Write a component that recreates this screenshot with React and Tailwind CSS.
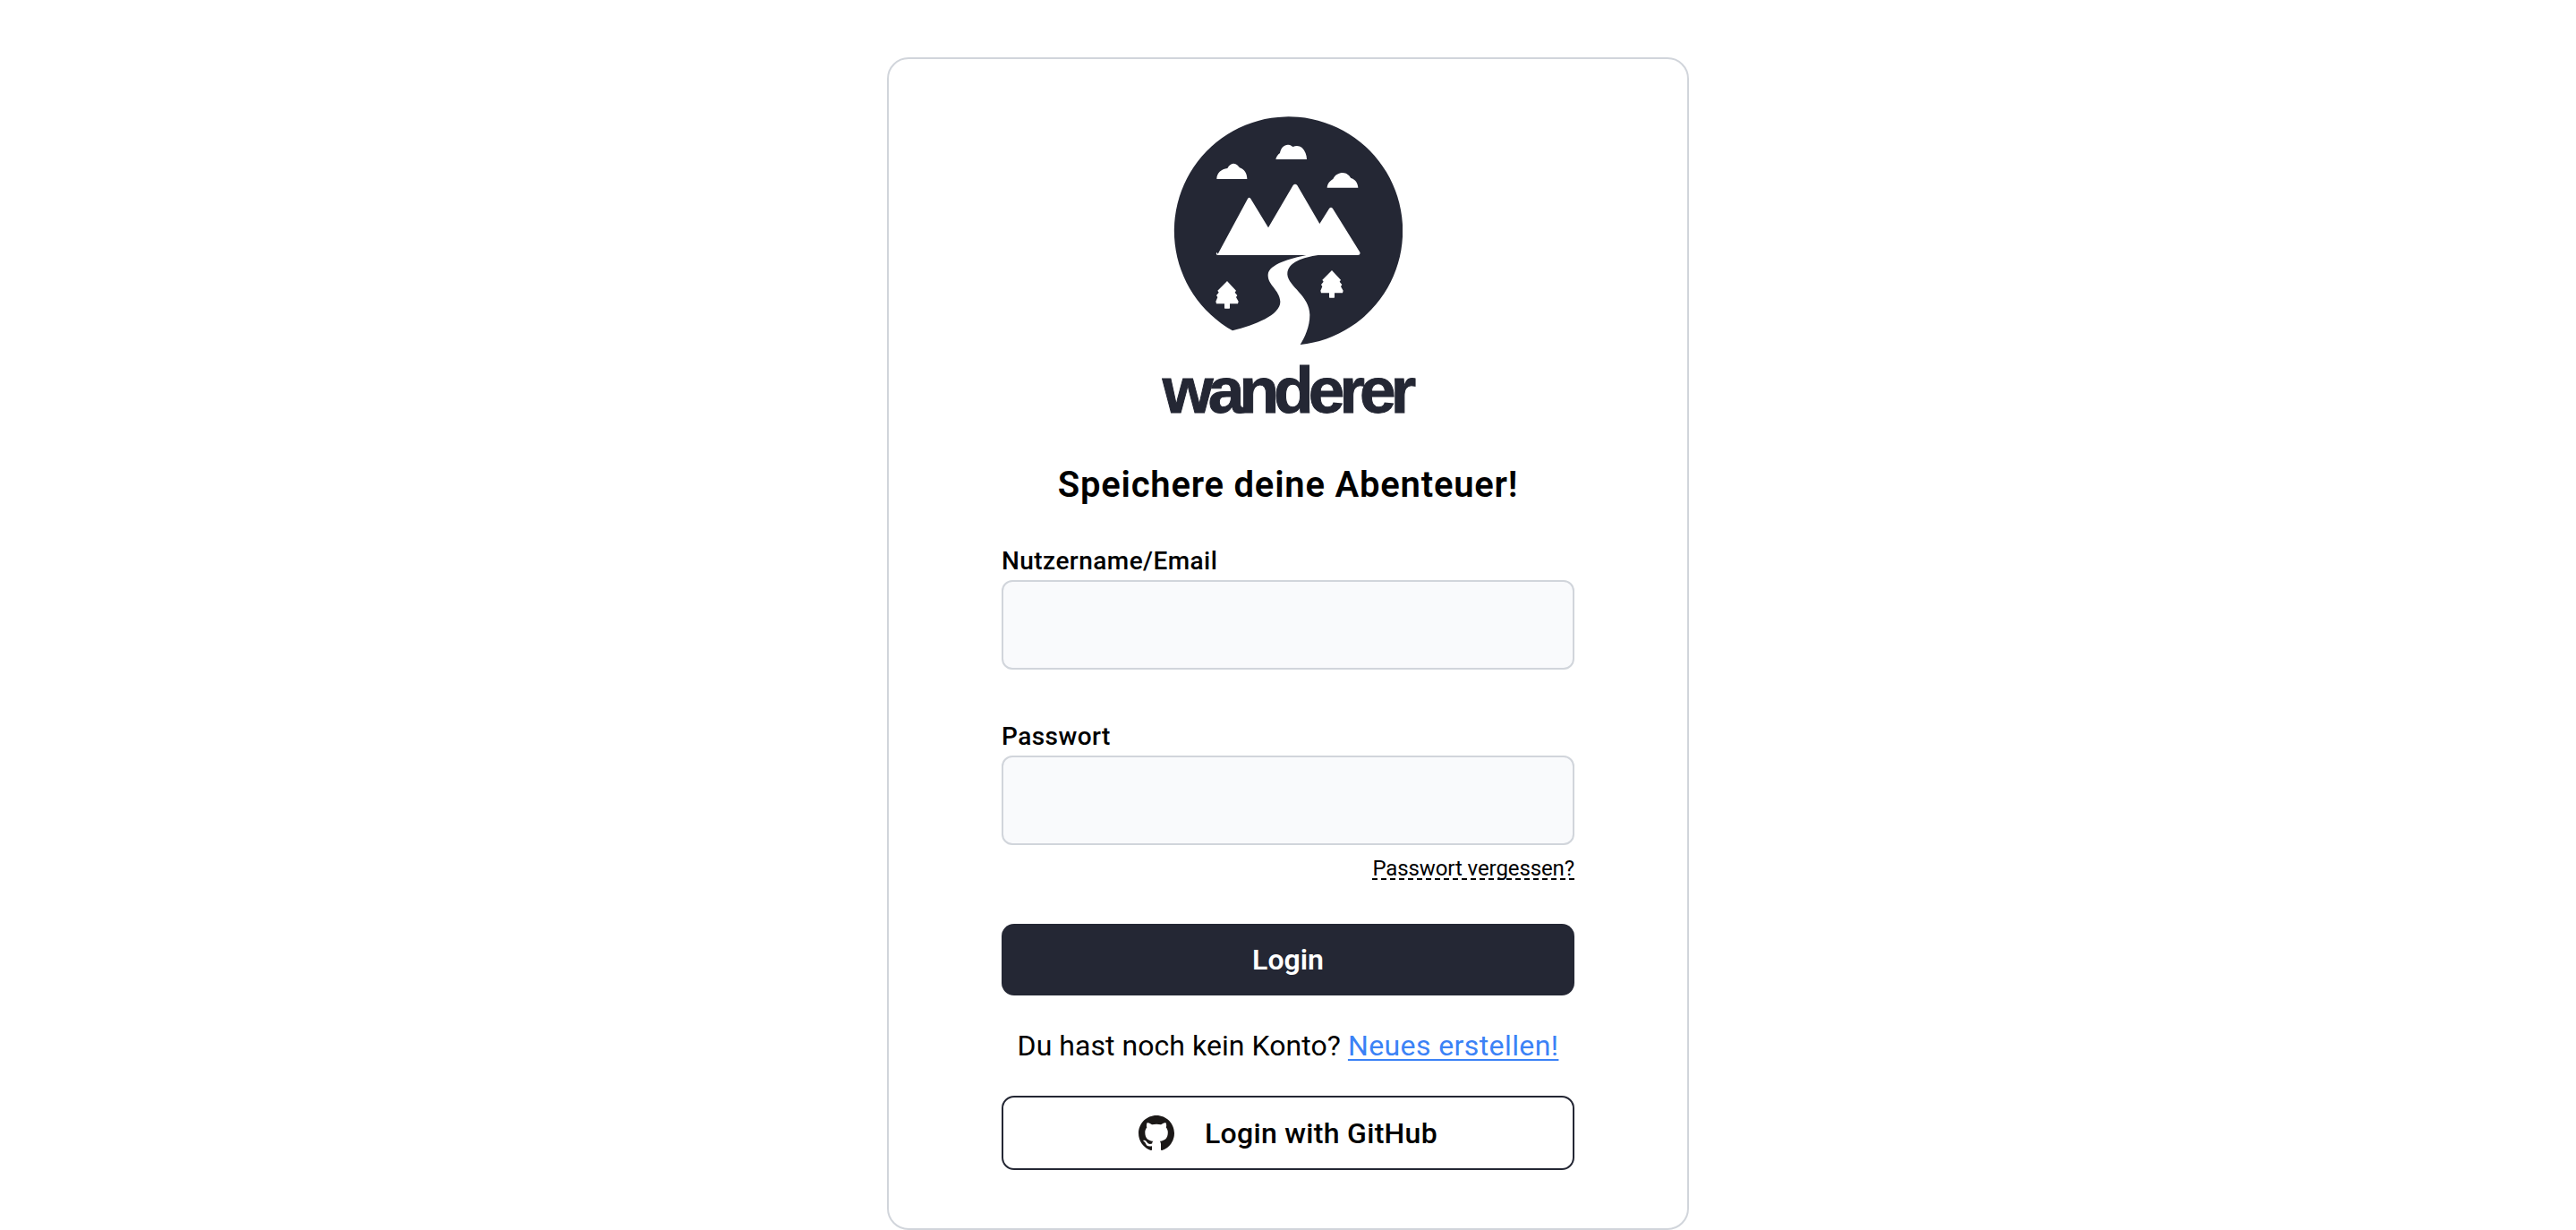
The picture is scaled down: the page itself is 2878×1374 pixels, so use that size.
import React from 'react';
import { BsGithub } from 'react-icons/bs';

const FONT = "font-['Roboto','Liberation_Sans',sans-serif]";

// Montagne, rivière, nuages et sapins du logo
function LogoMark() {
  const tree = 'M0 0 L30 32 L26 38 L34 48 L30 54 L38 68 L36 76 L9 76 L9 90 Q9 92 7 92 L-7 92 Q-9 92 -9 90 L-9 76 L-36 76 L-38 68 L-32 54 L-36 48 L-28 38 L-32 32 Z';
  return (
    <svg viewBox="155 60 768 768" className="w-[256px] h-[256px]">
      <path
        fill="#242734"
        d="M580 825 A383 383 0 1 0 353 778 C430 758 515 725 513 680 C510 640 470 625 472 590 C475 555 550 535 600 525 L640 525 C590 532 535 550 537 590 C540 630 612 660 612 725 C612 765 595 800 580 825 Z"
      />
      <g fill="#ffffff">
        <path d="M304 521 L404 336 Q409 328 414 336 L473 433 L556 291 Q563 284 570 291 L645 420 L677 369 Q683 362 689 369 L780 515 Q783 525 773 525 L306 525 Q295 525 300 515 Z" />
        <path d="M300 270 C300 250 315 237 336 234 C342 222 350 218 357 218 C366 218 372 226 377 232 C392 236 402 252 402 270 Z" />
        <path d="M498 204 C500 195 505 188 512 183 C515 165 527 154 540 155 C548 155 552 160 556 162 C565 157 578 158 586 165 C596 175 602 190 602 204 Z" />
        <path d="M670 299 C671 285 680 276 690 270 C697 255 710 249 722 249 C735 249 745 258 750 267 C764 271 773 283 774 299 Z" />
        <path d={tree} transform="translate(335 612)" />
        <path d={tree} transform="translate(686 576)" />
      </g>
    </svg>
  );
}

function Field({ label, className }) {
  return (
    <div className={className}>
      <label className="block text-[28px] leading-[42px] font-medium tracking-[0.45px] text-black">{label}</label>
      <input className="block w-full h-[100px] bg-[#f9fafc] border-2 border-[#d1d5db] rounded-[12px]" />
    </div>
  );
}

export default function App() {
  return (
    <div className={`${FONT} bg-white min-h-screen flex justify-center pt-[64px]`}>
      <div className="w-[896px] h-[1310px] border-2 border-[#d1d5db] rounded-[24px] flex flex-col items-center px-[126px] pt-[64px]">
        <LogoMark />
        <div className="font-['Liberation_Sans',sans-serif] font-bold text-[73px] leading-[84px] tracking-[-5.9px] [-webkit-text-stroke:1px_#242734] text-[#242734] mt-[8px] -ml-[3px]">
          wanderer
        </div>

        <h1 className="text-[40px] leading-[56px] font-semibold tracking-[0.78px] text-black mt-[36px] text-center">
          Speichere deine Abenteuer!
        </h1>

        <form className="w-full flex flex-col mt-[36px]">
          <Field label="Nutzername/Email" />
          <Field label="Passwort" className="mt-[54px]" />
          <div className="flex justify-end mt-[10px]">
            <a className="text-[24px] leading-[32px] tracking-[-0.1px] text-black underline decoration-dashed decoration-[1.5px] underline-offset-[3px] [text-decoration-skip-ink:none]">Passwort vergessen?</a>
          </div>
          <button className="w-full h-[80px] mt-[46px] bg-[#242734] text-white text-[32px] font-semibold rounded-[14px]">
            Login
          </button>
          <p className="text-center text-[32px] leading-[48px] tracking-[0.05px] text-black mt-[32px]">
            Du hast noch kein Konto?{' '}
            <a className="text-[#3b82f6] tracking-[0.4px] underline decoration-2 underline-offset-[4px] [text-decoration-skip-ink:none]">Neues erstellen!</a>
          </p>
          <button className="w-full h-[83px] mt-[32px] bg-white border-2 border-[#242734] rounded-[14px] flex items-center justify-center gap-[34px] text-[32px] font-medium tracking-[0.3px] text-black">
            <BsGithub className="w-[40px] h-[40px] text-[#1b1817]" />
            Login with GitHub
          </button>
        </form>
      </div>
    </div>
  );
}
